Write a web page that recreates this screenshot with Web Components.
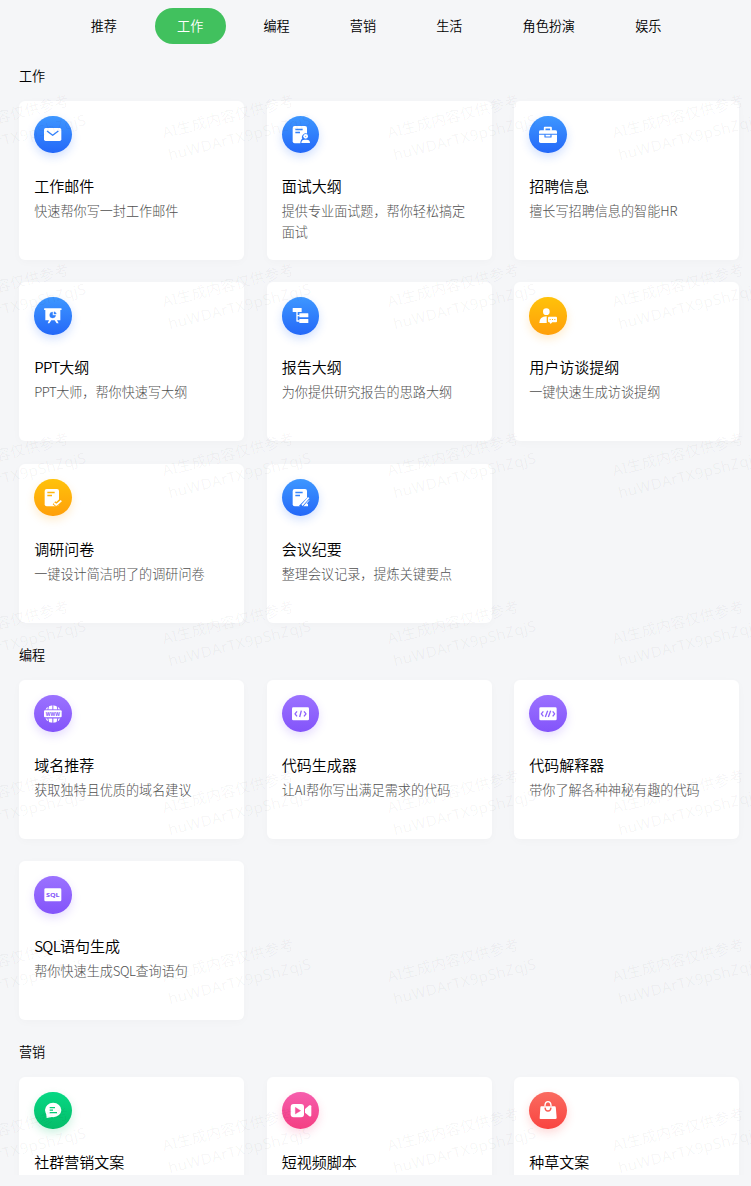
<!DOCTYPE html>
<html lang="zh-CN">
<head>
<meta charset="utf-8">
<title>工作</title>
<style>
html,body{margin:0;height:100%;overflow:hidden;background:#f5f6f8}
body{font-family:"Noto Sans CJK SC","Noto Sans",sans-serif;font-weight:300;color:#000}
.tight{letter-spacing:-.7px}
.snug{letter-spacing:-.45px}
</style>
</head>
<body>
<template-page>
  <tab-bar slot="tabs">
    <tab-item>推荐</tab-item><tab-item active>工作</tab-item><tab-item>编程</tab-item><tab-item>营销</tab-item><tab-item>生活</tab-item><tab-item>角色扮演</tab-item><tab-item>娱乐</tab-item>
  </tab-bar>
  <card-section>
    <span slot="heading">工作</span>
    <app-card icon="mail" tone="blue"><span slot="name">工作邮件</span>快速帮你写一封工作邮件</app-card>
    <app-card icon="interview" tone="blue"><span slot="name">面试大纲</span>提供专业面试题，帮你轻松搞定面试</app-card>
    <app-card icon="briefcase" tone="blue"><span slot="name">招聘信息</span>擅长写招聘信息的智能HR</app-card>
    <app-card icon="board" tone="blue"><span slot="name"><span class="tight">PPT</span>大纲</span><span class="snug">PPT</span>大师，帮你快速写大纲</app-card>
    <app-card icon="tree" tone="blue"><span slot="name">报告大纲</span>为你提供研究报告的思路大纲</app-card>
    <app-card icon="user" tone="amber"><span slot="name">用户访谈提纲</span>一键快速生成访谈提纲</app-card>
    <app-card icon="survey" tone="amber"><span slot="name">调研问卷</span>一键设计简洁明了的调研问卷</app-card>
    <app-card icon="notes" tone="blue"><span slot="name">会议纪要</span>整理会议记录，提炼关键要点</app-card>
  </card-section>
  <card-section>
    <span slot="heading">编程</span>
    <app-card icon="www" tone="purple"><span slot="name">域名推荐</span>获取独特且优质的域名建议</app-card>
    <app-card icon="code" tone="purple"><span slot="name">代码生成器</span>让AI帮你写出满足需求的代码</app-card>
    <app-card icon="explain" tone="purple"><span slot="name">代码解释器</span>带你了解各种神秘有趣的代码</app-card>
    <app-card icon="sql" tone="purple"><span slot="name"><span class="tight">SQL</span>语句生成</span>帮你快速生成<span class="snug">SQL</span>查询语句</app-card>
  </card-section>
  <card-section>
    <span slot="heading">营销</span>
    <app-card icon="chat" tone="green"><span slot="name">社群营销文案</span></app-card>
    <app-card icon="video" tone="pink"><span slot="name">短视频脚本</span></app-card>
    <app-card icon="bag" tone="red"><span slot="name">种草文案</span></app-card>
  </card-section>
  <water-mark slot="overlay"></water-mark>
</template-page>
<script>
const define = (name, html) => customElements.define(name, class extends HTMLElement {
  connectedCallback() {
    if (this.shadowRoot) return;
    this.attachShadow({mode: 'open'}).innerHTML = typeof html === 'function' ? html(this) : html;
  }
});

define('template-page', `<style>
:host{display:block;position:relative;height:1186px;overflow:hidden}
main{height:1175.4px;overflow:hidden;box-sizing:border-box;padding-top:8px}
</style><main><slot name="tabs"></slot><slot></slot></main><slot name="overlay"></slot>`);

define('tab-bar', `<style>
:host{display:flex;justify-content:center;gap:15.2px;height:36px;padding-left:1px}
</style><slot></slot>`);

define('tab-item', `<style>
:host{display:flex;align-items:center;padding:0 22.5px;border-radius:18px;font-size:13.1px;line-height:20px;white-space:nowrap;font-weight:350}
:host([active]){background:#41c15e;color:#fff}
</style><slot></slot>`);

define('card-section', `<style>
:host{display:block;padding:0 12px 0 19px}
h2{margin:0;height:56.6px;display:flex;align-items:center;box-sizing:border-box;padding-top:6px;font:inherit;font-size:13.1px;font-weight:350}
.grid{display:grid;grid-template-columns:repeat(3,225px);grid-auto-rows:159.2px;gap:22.4px 22.5px}
</style><h2><slot name="heading"></slot></h2><div class="grid"><slot></slot></div>`);

const tones = {
  blue: ['#3e97ff', '#2468f8'], amber: ['#ffc20a', '#ff9f0a'], purple: ['#9b72ff', '#8354fa'],
  green: ['#06d884', '#05bd69'], pink: ['#f65dad', '#f43f83'], red: ['#fa6b60', '#f94440']
};
const page = '<rect x="32" y="30" width="43" height="52" rx="6"/><path class="k" d="M40 40.500H62M40 49.500H54" stroke-width="4"/>';
const icons = {
  mail: '<rect x="30" y="36" width="52" height="39" rx="5"/><path class="k" d="M39 45L56 58L73 45" stroke-width="4"/>',
  interview: page + '<path class="c" stroke-width="6" d="M58 82Q58 72 65 69A8 8 0 1 1 77 69Q84 72 84 82Z"/><circle cx="71" cy="61" r="7"/><circle class="c" cx="71" cy="61" r="1"/><path d="M58 81Q58 71 68 71H74Q84 71 84 81Z"/>',
  briefcase: '<path class="w" stroke-width="5" d="M47 44V35H66V44"/><path d="M30 53V47Q30 43 35 43H79Q84 43 84 47V53Z"/><path d="M30 56H84V76Q84 81 79 81H35Q30 81 30 76Z"/><path class="k" stroke-width="3.500" d="M48 55V63H66V55"/>',
  board: '<rect x="30" y="34" width="53" height="5" rx="2"/><path d="M34 37H79V70H34ZM45 70H52L46 79H41ZM62 70H69L74 79H68Z"/><path class="c" d="M56 45A9 9 0 1 0 65 55H56Z"/><path class="c" d="M60 44A8 8 0 0 1 67 51H60Z"/>',
  tree: '<rect x="32" y="33" width="27" height="12" rx="1"/><rect x="52" y="49" width="27" height="12" rx="1"/><rect x="52" y="66" width="27" height="12" rx="1"/><path class="w" stroke-width="4" d="M45 44V72H53M45 56H53"/>',
  user: '<circle cx="52" cy="44" r="10"/><path d="M31 78Q31 59 53 58V78Z"/><rect x="57" y="59" width="27" height="17" rx="3"/><path d="M61 75H70L65 81Z"/><path class="k" stroke-width="3" d="M62 67.500H65M69 67.500H72M76 67.500H79"/>',
  survey: page + '<path class="k" stroke-width="12" d="M60 71L67 77L82 63"/><path class="w" stroke-width="5" d="M60 72L67 78L82 65"/>',
  notes: page + '<path class="k" stroke-width="11" d="M55 84L84 55"/><path class="w" stroke-width="5" d="M60 79L80 56"/><path class="w" stroke-width="3" d="M67 80L81 64"/><path d="M70 82L78 73V82Z"/>',
  www: '<circle cx="56.500" cy="57" r="26"/><path class="k" stroke-width="3" d="M44 30Q35 57 44 84M69 30Q78 57 69 84M56.500 30V84"/><path class="c" d="M28 43.500H85V70H28Z"/><rect x="30" y="46" width="53" height="21" rx="3"/><text x="56.500" y="62" font-size="14" textLength="42" lengthAdjust="spacingAndGlyphs">WWW</text>',
  code: '<rect x="30" y="37" width="51" height="39" rx="4"/><path class="k" stroke-width="4" d="M45 49L39 56.500L45 64M66 49L72 56.500L66 64M58 47L53 66"/>',
  explain: '<rect x="31" y="37" width="52" height="39" rx="4"/><path class="k" stroke-width="4" d="M43 49L37 56.500L43 64M71 49L77 56.500L71 64M56 47L49 66M65 47L58 66"/>',
  sql: '<rect x="31" y="37" width="51" height="39" rx="4"/><text x="56.500" y="63" font-size="18" textLength="41" lengthAdjust="spacingAndGlyphs">SQL</text>',
  chat: '<ellipse cx="57.500" cy="54" rx="24.500" ry="21.500"/><path d="M36 60L38 78L58 74Z"/><path class="k" stroke-width="4" d="M47 47H63M47 54.500H57M47 62H69"/>',
  video: '<rect x="26" y="36" width="40" height="40" rx="9"/><path class="c" d="M40 46L56 56L40 66Z"/><path d="M69 51L82 40Q88 38 88 43V70Q88 75 82 73L69 62Z"/>',
  bag: '<path d="M37 43H77Q80 43 80.500 47L83 77Q83 81 79 81H35Q31 81 32 77L34 47Q34 43 37 43Z"/><path class="w" stroke-width="4" d="M48 43V39Q49 29 57 29T66 39V43"/><path class="k" stroke-width="4" d="M48 47Q49 57 57 57T66 47"/>'
};

define('tone-icon', el => {
  const [a, b] = tones[el.getAttribute('tone')];
  return `<style>
:host{display:block;width:37.5px;height:37.5px;border-radius:50%;background:linear-gradient(${a},${b});box-shadow:0 4px 10px ${b}33}
svg{display:block;width:100%;height:100%;fill:#fff}
.w,.k{stroke:#fff;fill:none;stroke-linejoin:round}
.k{stroke:url(#g)}.c{fill:url(#g);stroke:url(#g)}
text{fill:${b};font:700 15px "Open Sans",sans-serif;text-anchor:middle}
</style><svg viewBox="0 0 112.5 112.5"><defs><linearGradient id="g" gradientUnits="userSpaceOnUse" x1="0" y1="0" x2="0" y2="112"><stop stop-color="${a}"/><stop offset="1" stop-color="${b}"/></linearGradient></defs>${icons[el.getAttribute('icon')]}</svg>`;
});

define('app-card', el => `<style>
:host{display:block;box-sizing:border-box;padding:15px 15.2px;background:#fff;border-radius:6px;box-shadow:0 2px 10px rgba(0,0,0,.025)}
h3{margin:20.7px 0 0;font:inherit;font-size:15px;line-height:24px;font-weight:350}
p{margin:1.8px 0 0;font-size:13.12px;line-height:21px;color:#505050}
</style><tone-icon icon="${el.getAttribute('icon')}" tone="${el.getAttribute('tone')}"></tone-icon>
<h3><slot name="name"></slot></h3><p><slot></slot></p>`);

define('water-mark', () => `<style>
:host{position:absolute;inset:0;overflow:hidden;pointer-events:none;display:block}
.grid{display:grid;grid-template-columns:repeat(4,225px);grid-auto-rows:168.8px;margin:121px 0 0 -61px}
.mark{transform:rotate(-14deg);transform-origin:0 16.5px;font:400 15px/22.5px "Noto Sans","Noto Sans CJK SC",sans-serif;color:rgba(0,0,0,.045);white-space:nowrap;height:45px}
.id{letter-spacing:.35px}
</style><div class="grid">${'<div class="mark">AI生成内容仅供参考<br><span class="id">huWDArTX9pShZqjS</span></div>'.repeat(28)}</div>`);
</script>
</body>
</html>
